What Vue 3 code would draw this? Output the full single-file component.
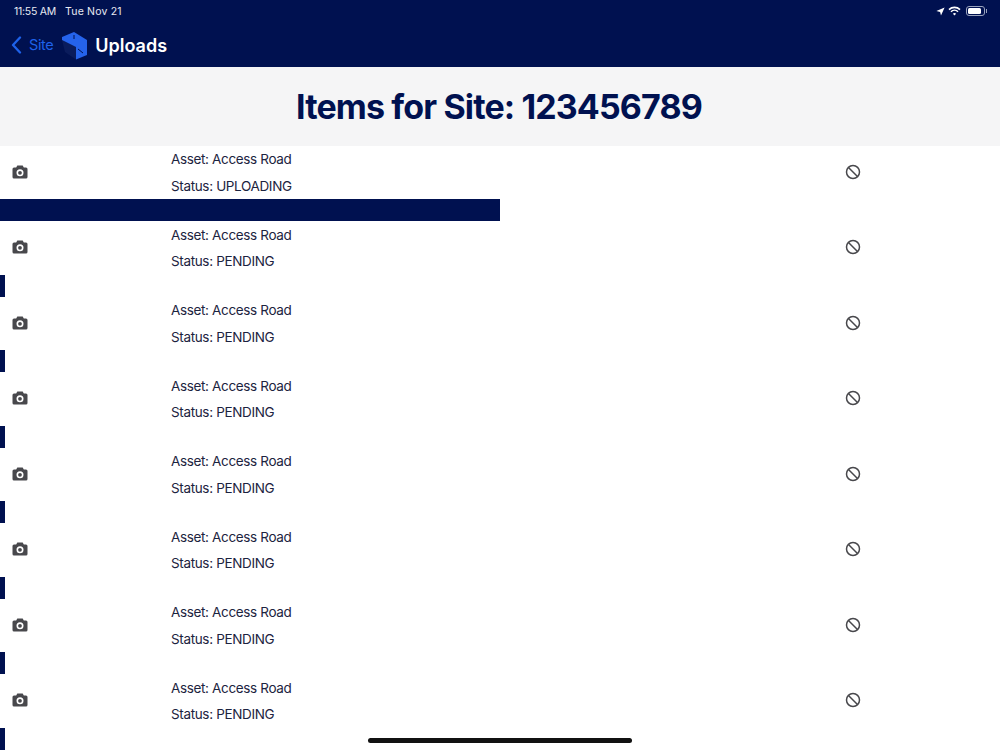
<script setup>
const items = [
  { status: 'UPLOADING', progress: 500 },
  ...Array.from({ length: 7 }, () => ({ status: 'PENDING', progress: 5 })),
]
</script>

<template>
  <div class="page">
    <header class="topbar">
      <div class="status">
        <div class="clock"><span class="time">11:55 AM</span><span class="date">Tue Nov 21</span></div>
        <div class="indicators">
          <svg width="9" height="9" viewBox="0 0 9 9"><path d="M8.6.4 5 8.6 4.1 4.9.4 4z" fill="#fff" /></svg>
          <svg width="13" height="10" viewBox="0 0 13 10" fill="none" stroke="#fff" stroke-width="1.6">
            <path d="M1 3.6a8 8 0 0 1 11 0" />
            <path d="M3 5.7a5 5 0 0 1 7 0" />
            <path d="M6.5 9.6 4.9 7.8a2.4 2.4 0 0 1 3.2 0z" fill="#fff" stroke="none" />
          </svg>
          <div class="battery"><i></i></div>
          <div class="cap"></div>
        </div>
      </div>
      <nav class="nav">
        <svg class="chev" width="11" height="18" viewBox="0 0 11 18" fill="none"><path d="M9 1.5 2 9l7 7.5" stroke="#1e62ea" stroke-width="2.3" stroke-linecap="round" stroke-linejoin="round" /></svg>
        <span class="back">Site</span>
        <svg class="logo" width="26" height="30" viewBox="0 0 26 30">
          <path d="M0 10l14 7v12.500L3 22z" fill="#0a1c5c" />
          <path d="M0 7 12 2l13 8v15l-11 4.500V17L0 10z" fill="#2563eb" />
          <path d="M12 5v4M16 19l5 4" stroke="#001150" stroke-width="1" fill="none" />
        </svg>
        <span class="title">Uploads</span>
      </nav>
    </header>

    <section class="heading"><h1>Items for Site: 123456789</h1></section>

    <div class="list">
      <article v-for="(item, i) in items" :key="i" class="item">
        <div class="row">
          <svg class="camera" width="16" height="14" viewBox="0 0 16 14">
            <path fill-rule="evenodd" fill="#48484c" d="M5.300.6h5.400l1.100 2h2.200A1.500 1.500 0 0 1 15.500 4.100v8A1.500 1.500 0 0 1 14 13.600H2A1.500 1.500 0 0 1 .5 12.100v-8A1.500 1.500 0 0 1 2 2.600h2.200zM8 4.300a3.500 3.500 0 1 0 0 7 3.500 3.500 0 0 0 0-7zm0 1.600a1.900 1.900 0 1 1 0 3.800 1.900 1.900 0 0 1 0-3.800z" />
          </svg>
          <div class="text">
            <p>Asset: Access Road</p>
            <p>Status: {{ item.status }}</p>
          </div>
          <svg class="ban" width="16" height="16" viewBox="0 0 16 16" fill="none" stroke="#48484c" stroke-width="1.500">
            <circle cx="8" cy="8" r="6.500" />
            <path d="M3.500 3.500l9 9" />
          </svg>
        </div>
        <div class="bar" :style="{ width: item.progress + 'px' }"></div>
      </article>
    </div>

    <div class="home"></div>
  </div>
</template>

<style scoped>
.page {
  position: relative;
  width: 1000px;
  height: 750px;
  overflow: hidden;
  background: #fff;
  font-family: Inter, "Liberation Sans", sans-serif;
}
.topbar {
  height: 67px;
  background: #001150;
  color: #fff;
}
.status {
  display: flex;
  justify-content: space-between;
  align-items: center;
  height: 22px;
  padding: 0 13px 0 14px;
  font-size: 10.5px;
}
.clock {
  display: flex;
  gap: 9px;
  color: #e8eaf2;
}
.time {
  letter-spacing: -0.25px;
}
.date {
  letter-spacing: 0.2px;
}
.indicators {
  display: flex;
  align-items: center;
  gap: 3px;
}
.battery {
  width: 19px;
  height: 10px;
  margin-left: 2px;
  padding: 1px;
  border: 1px solid #9aa3bd;
  border-radius: 3px;
  box-sizing: border-box;
  display: flex;
}
.battery i {
  width: 13px;
  background: #fff;
  border-radius: 1.500px;
}
.cap {
  width: 1px;
  height: 4px;
  margin-left: -2px;
  background: #9aa3bd;
}
.nav {
  display: flex;
  align-items: center;
  height: 45px;
  padding-left: 11px;
}
.back {
  margin-left: 7px;
  font-size: 14.500px;
  letter-spacing: -0.4px;
  color: #1e62ea;
}
.logo {
  margin-left: 9px;
}
.title {
  margin-left: 7px;
  margin-top: 2px;
  font-size: 18px;
  font-weight: 600;
}
.heading {
  display: flex;
  justify-content: center;
  align-items: center;
  height: 79px;
  padding-right: 2px;
  box-sizing: border-box;
  background: #f5f5f6;
}
h1 {
  margin: 0;
  font-size: 34px;
  font-weight: 700;
  letter-spacing: -0.87px;
  color: #001150;
}
.item {
  height: 75.500px;
}
.row {
  display: grid;
  grid-template-columns: 171px 674px 1fr;
  align-items: center;
  height: 53px;
}
.camera {
  margin-left: 12px;
  margin-bottom: 2px;
}
.ban {
  margin-bottom: 2px;
}
.text {
  color: #1c2340;
  font-size: 13.500px;
  letter-spacing: -0.35px;
  line-height: 26.500px;
}
.text p {
  margin: 0;
}
.bar {
  height: 22px;
  background: #001150;
}
.home {
  position: absolute;
  left: 368px;
  bottom: 7px;
  width: 264px;
  height: 5px;
  border-radius: 3px;
  background: #111;
}
</style>
